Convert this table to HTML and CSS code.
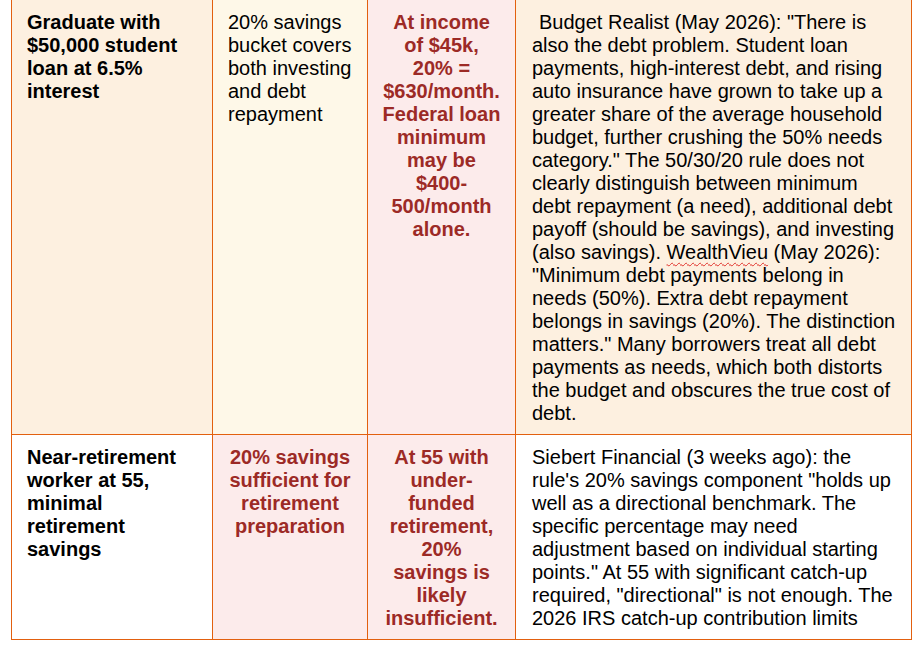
FILE: index.html
```html
<!DOCTYPE html>
<html>
<head>
<meta charset="utf-8">
<link rel="stylesheet" href="styles.css">
</head>
<body>
<div class="table">
  <div class="cell peach label">Graduate with<br>$50,000 student<br>loan at 6.5%<br>interest</div>
  <div class="cell cream">20% savings<br>bucket covers<br>both investing<br>and debt<br>repayment</div>
  <div class="cell pink alert">At income<br>of $45k,<br>20% =<br>$630/month.<br>Federal loan<br>minimum<br>may be<br>$400-<br>500/month<br>alone.</div>
  <div class="cell peach note indent">Budget Realist (May 2026): "There is<br>also the debt problem. Student loan<br>payments, high-interest debt, and rising<br>auto insurance have grown to take up a<br>greater share of the average household<br>budget, further crushing the 50% needs<br>category." The 50/30/20 rule does not<br>clearly distinguish between minimum<br>debt repayment (a need), additional debt<br>payoff (should be savings), and investing<br>(also savings). <span class="spell">WealthVieu</span> (May 2026):<br>"Minimum debt payments belong in<br>needs (50%). Extra debt repayment<br>belongs in savings (20%). The distinction<br>matters." Many borrowers treat all debt<br>payments as needs, which both distorts<br>the budget and obscures the true cost of<br>debt.</div>

  <div class="cell white label">Near-retirement<br>worker at 55,<br>minimal<br>retirement<br>savings</div>
  <div class="cell pink alert">20% savings<br>sufficient for<br>retirement<br>preparation</div>
  <div class="cell pink alert">At 55 with<br>under-<br>funded<br>retirement,<br>20%<br>savings is<br>likely<br>insufficient.</div>
  <div class="cell white note">Siebert Financial (3 weeks ago): the<br>rule's 20% savings component "holds up<br>well as a directional benchmark. The<br>specific percentage may need<br>adjustment based on individual starting<br>points." At 55 with significant catch-up<br>required, "directional" is not enough. The<br>2026 IRS catch-up contribution limits</div>
</div>
</body>
</html>
```
FILE: styles.css
```css
html, body {
  margin: 0;
  padding: 0;
  background: #ffffff;
}

.table {
  display: grid;
  grid-template-columns: 200px 154px 147px 395px;
  grid-template-rows: 434px 204px;
  gap: 1px;
  width: max-content;
  margin: -1px 0 0 11px;
  border: 1px solid #e2600f;
  background: #e2600f;
  font-family: "Liberation Sans", Arial, sans-serif;
  font-size: 20px;
  line-height: 23px;
  color: #000000;
}

.cell {
  padding: 11px 15px 0 15px;
  white-space: nowrap;
  overflow: hidden;
}

.peach { background: #fdf0e0; }
.cream { background: #fef8e8; }
.pink { background: #fcebeb; }
.white { background: #ffffff; }

.label {
  font-weight: bold;
}

.alert {
  font-weight: bold;
  color: #9c2a26;
  text-align: center;
  padding-left: 2px;
  padding-right: 2px;
}

.note {
  padding-left: 16px;
}

.indent {
  text-indent: 7px;
}

.spell {
  text-decoration: underline wavy #e0302a;
  text-decoration-thickness: 1px;
  text-underline-offset: 3px;
}
```
